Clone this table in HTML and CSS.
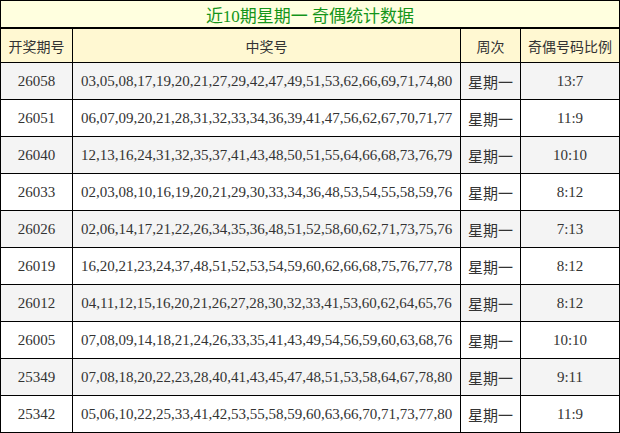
FILE: index.html
```html
<!DOCTYPE html>
<html>
<head>
<meta charset="utf-8">
<link rel="stylesheet" href="styles.css">
</head>
<body>
<table class="tbl">
  <colgroup>
    <col class="c1"><col class="c2"><col class="c3"><col class="c4">
  </colgroup>
  <tr class="title-row"><td colspan="4">近10期星期一 奇偶统计数据</td></tr>
  <tr class="head-row"><td>开奖期号</td><td>中奖号</td><td>周次</td><td>奇偶号码比例</td></tr>
  <tr class="alt"><td>26058</td><td>03,05,08,17,19,20,21,27,29,42,47,49,51,53,62,66,69,71,74,80</td><td class="cn">星期一</td><td>13:7</td></tr>
  <tr><td>26051</td><td>06,07,09,20,21,28,31,32,33,34,36,39,41,47,56,62,67,70,71,77</td><td class="cn">星期一</td><td>11:9</td></tr>
  <tr class="alt"><td>26040</td><td>12,13,16,24,31,32,35,37,41,43,48,50,51,55,64,66,68,73,76,79</td><td class="cn">星期一</td><td>10:10</td></tr>
  <tr><td>26033</td><td>02,03,08,10,16,19,20,21,29,30,33,34,36,48,53,54,55,58,59,76</td><td class="cn">星期一</td><td>8:12</td></tr>
  <tr class="alt"><td>26026</td><td>02,06,14,17,21,22,26,34,35,36,48,51,52,58,60,62,71,73,75,76</td><td class="cn">星期一</td><td>7:13</td></tr>
  <tr><td>26019</td><td>16,20,21,23,24,37,48,51,52,53,54,59,60,62,66,68,75,76,77,78</td><td class="cn">星期一</td><td>8:12</td></tr>
  <tr class="alt"><td>26012</td><td>04,11,12,15,16,20,21,26,27,28,30,32,33,41,53,60,62,64,65,76</td><td class="cn">星期一</td><td>8:12</td></tr>
  <tr><td>26005</td><td>07,08,09,14,18,21,24,26,33,35,41,43,49,54,56,59,60,63,68,76</td><td class="cn">星期一</td><td>10:10</td></tr>
  <tr class="alt"><td>25349</td><td>07,08,18,20,22,23,28,40,41,43,45,47,48,51,53,58,64,67,78,80</td><td class="cn">星期一</td><td>9:11</td></tr>
  <tr><td>25342</td><td>05,06,10,22,25,33,41,42,53,55,58,59,60,63,66,70,71,73,77,80</td><td class="cn">星期一</td><td>11:9</td></tr>
</table>
</body>
</html>
```

FILE: styles.css
```css
html, body {
  margin: 0;
  padding: 0;
  background: #ffffff;
}

.tbl {
  width: 619px;
  border-collapse: collapse;
  table-layout: fixed;
  border: 1px solid #000;
  font-family: "Liberation Serif", "Noto Sans CJK SC", serif;
  font-size: 15px;
  color: #333;
}

.c1 { width: 72px; }
.c2 { width: 388px; }
.c3 { width: 60px; }
.c4 { width: 99px; }

.tbl td {
  border: 1px solid #000;
  text-align: center;
  padding: 0;
  height: 36px;
  white-space: nowrap;
}

.title-row td {
  background: #ffffdf;
  color: #14951a;
  font-size: 17px;
  height: 26px;
  border-bottom: 2px solid #000;
}

.head-row td {
  background: #fff8d2;
  font-family: "Noto Sans CJK SC", sans-serif;
  font-size: 14px;
  height: 33px;
  color: #333;
}

.alt td {
  background: #f4f4f4;
}

.tbl td.cn {
  font-family: "Noto Sans CJK SC", sans-serif;
  font-size: 15px;
}
```
